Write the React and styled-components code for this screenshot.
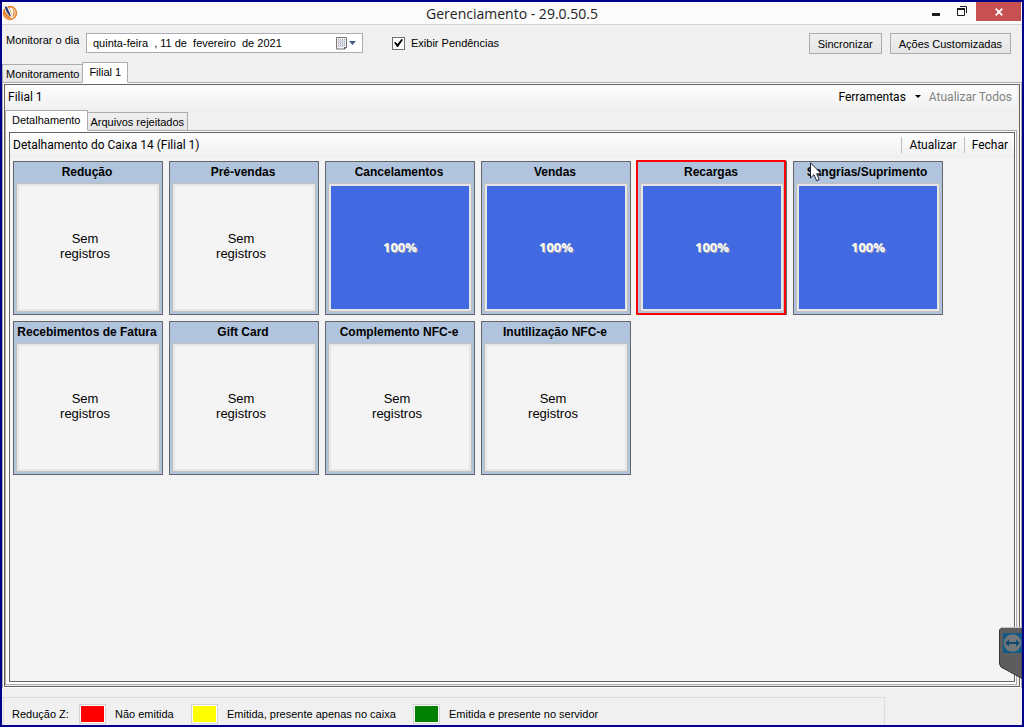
import React, { useState } from 'react'
import styled, { createGlobalStyle, css } from "styled-components";

const sansUi = `"Liberation Sans", Arial, sans-serif`;
const toolUi = `Roboto, "Liberation Sans", sans-serif`;
const titleUi = `"Open Sans", "Noto Sans", sans-serif`;

const tiles = [
  { title: "Redução" },
  { title: "Pré-vendas" },
  { title: "Cancelamentos", percent: 100 },
  { title: "Vendas", percent: 100 },
  { title: "Recargas", percent: 100, selected: true },
  { title: "Sangrias/Suprimento", percent: 100, pointer: true },
  { title: "Recebimentos de Fatura" },
  { title: "Gift Card" },
  { title: "Complemento NFC-e" },
  { title: "Inutilização NFC-e" },
];

const legend = [
  { color: "#ff0000", text: "Não emitida" },
  { color: "#ffff00", text: "Emitida, presente apenas no caixa" },
  { color: "#008000", text: "Emitida e presente no servidor" },
];

const Logo = () => (
  <LogoSvg viewBox="0 0 16 16" width="16" height="16" aria-hidden="true">
    <circle cx="8" cy="8" r="6.4" fill="#fff" stroke="#e8802c" strokeWidth="1.6" />
    <path d="M1.4 4.6 C1.4 9.6 4.6 13.4 9 13.6 L8.4 11.4 C5.4 10 3.4 7.4 2.6 4Z" fill="#e8802c" />
    <path d="M2 .8 L5.4 1.4 L9.4 10.8 L8.4 12 C5.4 9.6 3 5.6 2 .8Z" fill="#fff" />
    <path d="M2.6 1.2 L5 2 L8.8 10.4 L8.2 11.4 C5.8 9.2 3.6 5.6 2.6 1.2Z" fill="#26396f" />
    <path d="M9.6 4 L10.6 4.2 C12 7 11.8 9.6 9.6 12.4 C13.4 11 14 6.4 10.6 3.4Z" fill="#e8802c" />
    <path d="M7 2.6 L9.8 9.4" stroke="#e8802c" strokeWidth=".7" />
  </LogoSvg>
)

const CalendarIcon = () => (
  <svg viewBox="0 0 20 13" width="20" height="13" aria-hidden="true">
    <path d="M.5 .5 H10.5 V10.5 L8.5 12 H.5Z" fill="#f6f4f4" stroke="#7b7272" />
    <path d="M2 2.5h7M2 4.5h7M2 6.5h7M2 8.5h7" stroke="#9aa3bf" strokeDasharray="1 1" />
    <path d="M2 3.5h7M2 5.5h7M2 7.5h7M2 9.5h6" stroke="#d3d6e2" />
    <path d="M8 12.5 V10 H11Z" fill="#6b6464" />
    <path d="M13 4 H20 L16.5 8Z" fill="#3f5b8c" />
  </svg>
)

const Pointer = () => (
  <PointerSvg viewBox="0 0 12 20" width="12" height="20" aria-hidden="true">
    <path d="M.5 .8 V16 L4 12.7 L6.6 18.7 L9.2 17.6 L6.7 11.8 H11.3Z" fill="#fff" stroke="#1c2233" />
  </PointerSvg>
)

const RemoteHandle = () => (
  <RemoteButton type="button" aria-label="Acesso remoto">
    <svg viewBox="0 0 23 52" width="23" height="52">
      <path d="M3 .5 H23 V51.5 L2 40 L.5 37 V3Z" fill="#5d5d5d" stroke="#333" />
      <path d="M3 .5 H23" stroke="#c4c4c4" />
      <rect x="4" y="6" width="19" height="20" fill="#0f5a88" />
      <circle cx="13.5" cy="16" r="8.8" fill="#72777a" />
      <path d="M6 16 L10 12.5 V15 H17 V12.5 L21 16 L17 19.5 V17 H10 V19.5Z" fill="#0f4a72" />
    </svg>
  </RemoteButton>
)

const Tile = ({ title, percent, selected, pointer }) => (
  <TileBox>
    <TileTitle>{title}</TileTitle>
    <TileBody $filled={percent !== undefined}>
      {percent !== undefined ? <Percent>{percent}%</Percent> : <Empty>Sem registros</Empty>}
    </TileBody>
    {selected && <Selection />}
    {pointer && <Pointer />}
  </TileBox>
)

const App = () => {
  const [pending, setPending] = useState(true)

  return (
    <Window>
      <GlobalStyle />
      <TitleBar>
        <Logo />
        <Title>Gerenciamento - 29.0.50.5</Title>
        <WindowButtons>
          <WindowButton type="button" aria-label="Minimizar">
            <svg viewBox="0 0 10 10" width="10" height="10"><path d="M0 6h8v3H0z" fill="#1c1c1c" /></svg>
          </WindowButton>
          <WindowButton type="button" aria-label="Restaurar">
            <svg viewBox="0 0 12 12" width="12" height="12">
              <path d="M3 .5H9.5V7" fill="none" stroke="#1c1c1c" />
              <path d="M.5 3V9.5H7.5V3" fill="none" stroke="#1c1c1c" />
              <path d="M0 3h8" stroke="#1c1c1c" strokeWidth="2" />
            </svg>
          </WindowButton>
          <WindowButton type="button" aria-label="Fechar janela" $close>
            <svg viewBox="0 0 8 8" width="8" height="8">
              <path d="M.7 .7 L7.3 7.3 M7.3 .7 L.7 7.3" stroke="#fff" strokeWidth="1.8" />
            </svg>
          </WindowButton>
        </WindowButtons>
      </TitleBar>

      <Filters>
        <DayLabel htmlFor="dia">Monitorar o dia</DayLabel>
        <DateField>
          <DateInput id="dia" readOnly value={"quinta-feira  , 11 de  fevereiro  de 2021"} />
          <DateButton type="button" aria-label="Abrir calendário"><CalendarIcon /></DateButton>
        </DateField>
        <CheckLabel>
          <CheckBox type="checkbox" checked={pending} onChange={(e) => setPending(e.target.checked)} />
          Exibir Pendências
        </CheckLabel>
        <Actions>
          <ActionButton type="button">Sincronizar</ActionButton>
          <ActionButton type="button">Ações Customizadas</ActionButton>
        </Actions>
      </Filters>

      <Tabs role="tablist">
        <Tab type="button" role="tab">Monitoramento</Tab>
        <Tab type="button" role="tab" aria-selected="true" $active>Filial 1</Tab>
      </Tabs>
      <OuterPage>
        <OuterPanel>
          <ToolBar>
            <ToolTitle>Filial 1</ToolTitle>
            <ToolButton type="button">Ferramentas<Caret /></ToolButton>
            <ToolButton type="button" disabled>Atualizar Todos</ToolButton>
          </ToolBar>
          <Tabs role="tablist">
            <Tab type="button" role="tab" aria-selected="true" $active>Detalhamento</Tab>
            <Tab type="button" role="tab">Arquivos rejeitados</Tab>
          </Tabs>
          <InnerPage>
            <InnerPanel>
              <ToolBar>
                <ToolTitle>Detalhamento do Caixa 14 (Filial 1)</ToolTitle>
                <Divider />
                <ToolButton type="button">Atualizar</ToolButton>
                <Divider />
                <ToolButton type="button">Fechar</ToolButton>
              </ToolBar>
              <TileGrid>
                {tiles.map((tile) => <Tile key={tile.title} {...tile} />)}
              </TileGrid>
            </InnerPanel>
          </InnerPage>
        </OuterPanel>
      </OuterPage>

      <Legend>
        <span>Redução Z:</span>
        {legend.map((item) => (
          <LegendItem key={item.text}>
            <Swatch $color={item.color} />
            {item.text}
          </LegendItem>
        ))}
      </Legend>
      <RemoteHandle />
    </Window>
  )
}

export default App

const GlobalStyle = createGlobalStyle`
  *, *::before, *::after {
    box-sizing: border-box;
  }

  body {
    margin: 0;
    background: #f0f0f0;
  }

  button, input {
    font: inherit;
    color: inherit;
    margin: 0;
  }
`;

const Window = styled.div`
  position: relative;
  display: flex;
  flex-direction: column;
  min-height: 100vh;
  border: 2px solid #00008b;
  background: #f0f0f0;
  color: #000;
  font: 11px/14px ${sansUi};
`;

const TitleBar = styled.header`
  display: grid;
  grid-template-columns: 1fr auto 1fr;
  height: 23px;
  background: #fbfbfb;
  border-bottom: 1px solid #d4d4d4;
`;

const LogoSvg = styled.svg`
  margin-top: 3px;
`;

const Title = styled.h1`
  margin: 0;
  font: 14px/23px ${titleUi};
  color: #222;
`;

const WindowButtons = styled.div`
  display: flex;
  justify-content: flex-end;
  padding-right: 1px;
`;

const WindowButton = styled.button`
  display: flex;
  align-items: center;
  justify-content: center;
  width: 26px;
  height: 19px;
  padding: 0;
  border: none;
  background: none;

  ${(p) => p.$close && css`
    width: 45px;
    background: #c75050;
  `}
`;

const Filters = styled.div`
  display: flex;
  align-items: flex-start;
  height: 37px;
  padding: 8px 11px 0 4px;
`;

const DayLabel = styled.label`
  width: 80px;
`;

const DateField = styled.div`
  display: flex;
  align-items: center;
  width: 277px;
  height: 20px;
  padding: 0 6px;
  border: 1px solid #abadb3;
  background: #fff;
`;

const DateInput = styled.input`
  flex: 1;
  min-width: 0;
  padding: 0;
  border: none;
  outline: none;
  background: none;
  white-space: pre;
`;

const DateButton = styled.button`
  display: flex;
  padding: 0;
  border: none;
  background: none;
`;

const CheckLabel = styled.label`
  display: flex;
  align-items: center;
  gap: 6px;
  height: 20px;
  margin-left: 29px;
`;

const CheckBox = styled.input`
  appearance: none;
  display: grid;
  place-items: center;
  width: 13px;
  height: 13px;
  border: 1px solid #707070;
  background: #fff;

  &:checked::before {
    content: "";
    width: 9px;
    height: 8px;
    background: #000;
    clip-path: polygon(0 45%, 18% 36%, 38% 62%, 84% 0, 100% 10%, 44% 100%, 34% 100%);
  }
`;

const Actions = styled.div`
  display: flex;
  gap: 8px;
  margin-left: auto;
`;

const ActionButton = styled.button`
  height: 21px;
  padding: 0 8px;
  border: 1px solid #acacac;
  background: linear-gradient(#f0f0f0, #e5e5e5);
`;

const Tabs = styled.div`
  display: flex;
  align-items: flex-end;
  height: 21px;
  margin-bottom: -1px;
`;

const Tab = styled.button`
  height: 19px;
  padding: 0 3px;
  border: 1px solid #acacac;
  background: linear-gradient(#f0f0f0, #e5e5e5);

  ${(p) => p.$active && css`
    height: 21px;
    padding: 0 6px 2px;
    border-bottom-color: #fff;
    background: #fff;
    z-index: 1;
  `}

  & + & {
    margin-left: -1px;
  }
`;

const OuterPage = styled.main`
  display: flex;
  flex: 1;
  padding: 1px;
  border: 1px solid #acacac;
  border-bottom: none;
  background: #fff;
`;

const OuterPanel = styled.section`
  display: flex;
  flex: 1;
  flex-direction: column;
  padding-right: 2px;
  padding-bottom: 1px;
  border: 1px solid #646464;
  background: #f0f0f0;
`;

const InnerPage = styled.div`
  display: flex;
  flex: 1;
  padding: 1px 1px 2px 3px;
  border: 1px solid #acacac;
  background: #fff;
`;

const InnerPanel = styled.section`
  flex: 1;
  border: 1px solid #646464;
  background: #f4f4f4;
`;

const ToolBar = styled.div`
  display: flex;
  align-items: center;
  height: 25px;
  padding: 0 2px 2px 3px;
  background: linear-gradient(#fdfdfd, #f0f0f0);
  font: 12px/16px ${toolUi};
`;

const ToolTitle = styled.span`
  margin-right: auto;
`;

const ToolButton = styled.button`
  display: flex;
  align-items: center;
  padding: 0 4px;
  border: none;
  background: none;

  &:disabled {
    padding-right: 3px;
    color: #838383;
  }
`;

const Caret = styled.span`
  margin-left: 9px;
  border: 3px solid transparent;
  border-top-color: #000;
  border-bottom: none;
`;

const Divider = styled.span`
  width: 1px;
  height: 16px;
  margin: 0 3px;
  background: #bdbdbd;
`;

const TileGrid = styled.div`
  display: grid;
  grid-template-columns: repeat(auto-fill, 150px);
  gap: 6px;
  padding: 3px;
`;

const TileBox = styled.article`
  position: relative;
  display: flex;
  flex-direction: column;
  height: 154px;
  padding: 0 2px 2px;
  border: 1px solid #646464;
  background: #b0c4de;
`;

const TileTitle = styled.h2`
  margin: 0;
  padding-right: 2px;
  font: bold 12px/21px ${sansUi};
  text-align: center;
  white-space: nowrap;
`;

const TileBody = styled.div`
  display: flex;
  flex: 1;
  align-items: center;
  justify-content: center;
  border: 1px solid #c0c0c0;
  outline: 2px solid #e6e6e6;
  outline-offset: -3px;
  background: ${(p) => (p.$filled ? "#4169e1" : "#f4f4f4")};
`;

const Empty = styled.p`
  width: 56px;
  margin: 0;
  padding: 0 6px 4px 0;
  font: 13px/15px ${sansUi};
  text-align: center;
`;

const Percent = styled.strong`
  font: bold 13px/15px ${titleUi};
  color: #fff;
  text-shadow: 1px 1px 0 #a9a9a9;
`;

const Selection = styled.span`
  position: absolute;
  inset: -2px 0 -1px -2px;
  border: 2px solid #ff0000;
  border-radius: 1px;
`;

const PointerSvg = styled.svg`
  position: absolute;
  top: 0;
  left: 16px;
`;

const Legend = styled.footer`
  display: grid;
  grid-template-columns: 67px 112px 222px auto;
  align-items: center;
  height: 28px;
  margin: 9px 137px 0 1px;
  padding: 5px 8px 0;
  border: 1px solid #dcdcdc;
  border-bottom: none;
`;

const LegendItem = styled.span`
  display: flex;
  align-items: center;
  gap: 9px;
`;

const Swatch = styled.span`
  width: 27px;
  height: 20px;
  border: 1px solid #d3d3d3;
  background: ${(p) => p.$color};
  box-shadow: inset 0 0 0 1px #fff;
`;

const RemoteButton = styled.button`
  position: absolute;
  right: 0;
  bottom: 46px;
  display: flex;
  padding: 0;
  border: none;
  background: none;
`;
